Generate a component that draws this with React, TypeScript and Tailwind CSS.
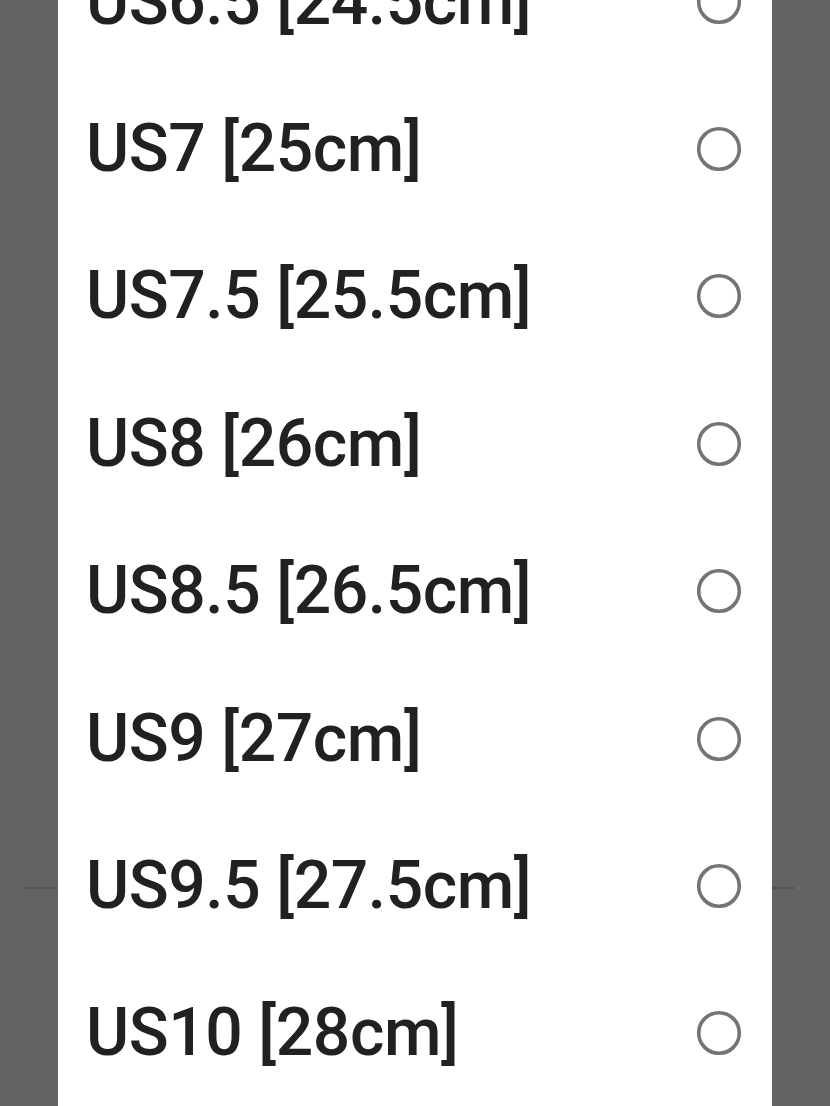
import { useState } from "react";

const sizes = [
  "US6.5 [24.5cm]",
  "US7 [25cm]",
  "US7.5 [25.5cm]",
  "US8 [26cm]",
  "US8.5 [26.5cm]",
  "US9 [27cm]",
  "US9.5 [27.5cm]",
  "US10 [28cm]",
  "US10.5 [28.5cm]",
];

const Radio = ({ checked }: { checked: boolean }) => (
  <svg width="48" height="48" viewBox="0 0 48 48">
    <circle
      cx="24"
      cy="24"
      r="20.3"
      fill="none"
      stroke={checked ? "#e53935" : "#747474"}
      strokeWidth="3.6"
    />
    {checked && <circle cx="24" cy="24" r="11" fill="#e53935" />}
  </svg>
);

const App = () => {
  const [selected, setSelected] = useState<string | null>(null);

  return (
    <div className="relative w-[830px] h-[1106px] overflow-hidden bg-white font-['Roboto',sans-serif]">
      {/* page behind the dialog */}
      <div className="pl-[23px] pr-[35px] pt-[887px]">
        <div className="h-[2px] bg-[#dcdcdc]"></div>
      </div>

      {/* overlay */}
      <div className="absolute inset-0 bg-[rgba(0,0,0,0.61)]">
        <div className="ml-[58px] w-[714px] -mt-[72px] bg-white">
          {sizes.map((s) => (
            <button
              key={s}
              onClick={() => setSelected(s)}
              className="w-full h-[147.4px] flex items-center justify-between pl-[28px] pr-[29px] text-left"
            >
              <span className="text-[66px] font-medium leading-none text-[#212121] tracking-[-0.45px]">
                {s}
              </span>
              <Radio checked={selected === s} />
            </button>
          ))}
        </div>
      </div>
    </div>
  );
};

export default App;
